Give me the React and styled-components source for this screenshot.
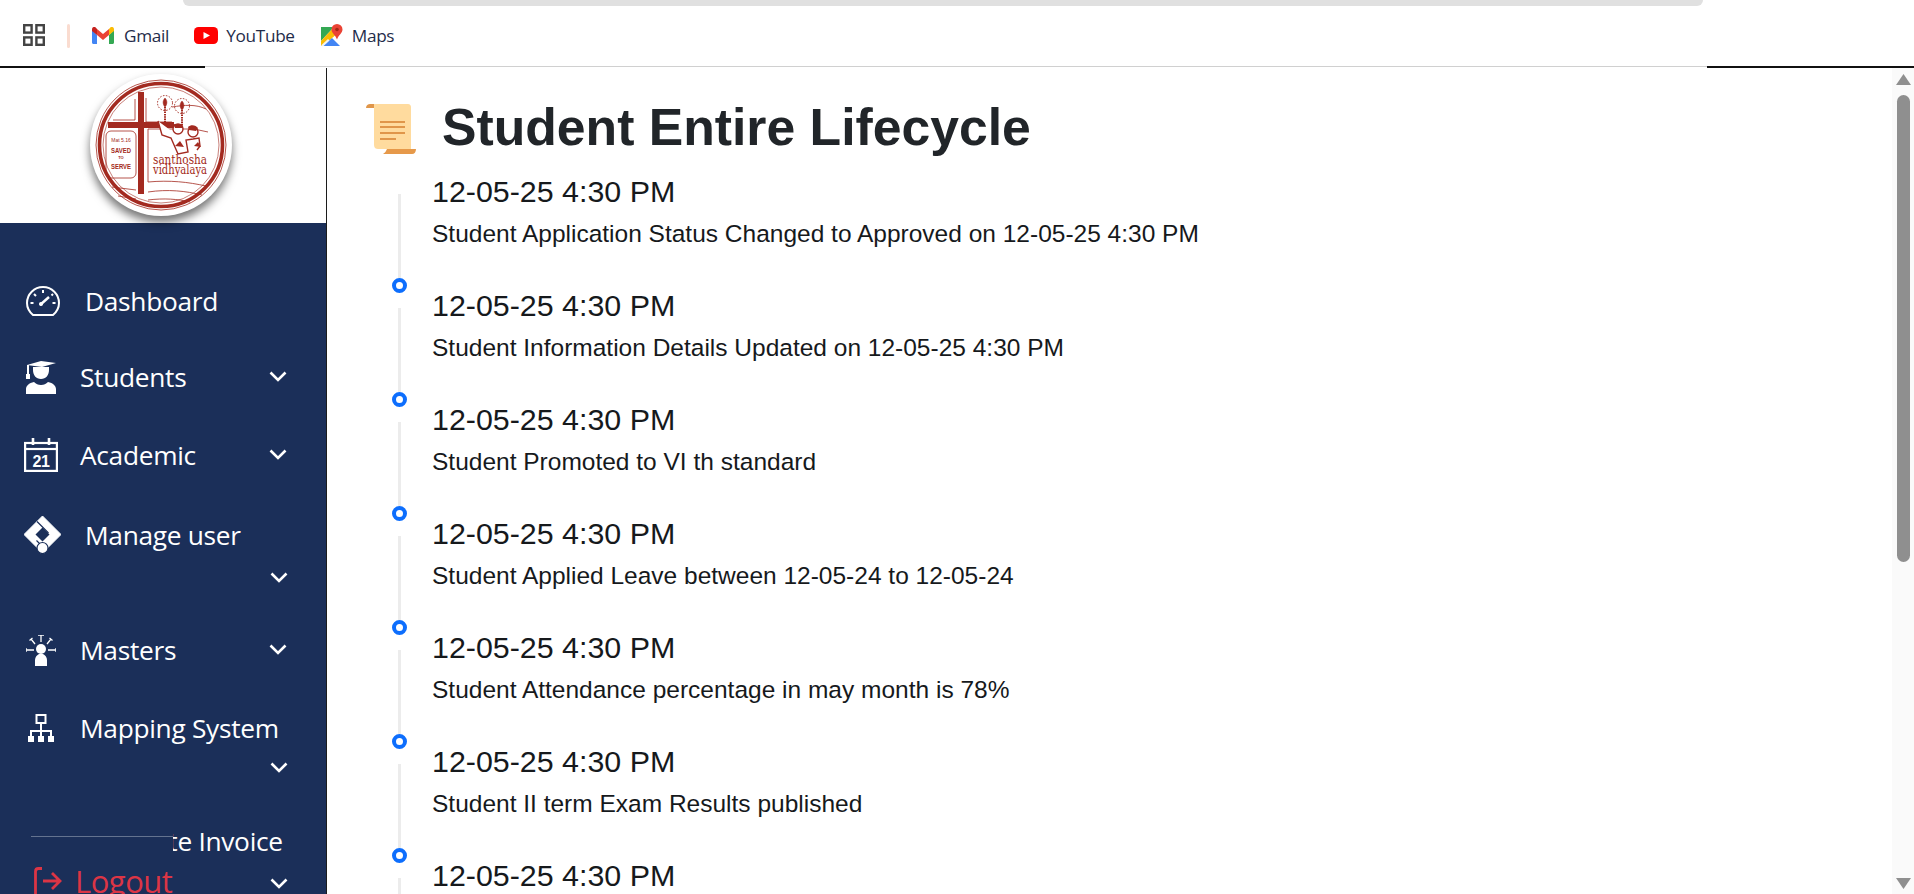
import styled, { createGlobalStyle } from 'styled-components';

const navy = '#1b2f59';
const logoRed = '#a32a20';

const events = [
    'Student Application Status Changed to Approved on 12-05-25 4:30 PM',
    'Student Information Details Updated on 12-05-25 4:30 PM',
    'Student Promoted to VI th standard',
    'Student Applied Leave between 12-05-24 to 12-05-24',
    'Student Attendance percentage in may month is 78%',
    'Student II term Exam Results published',
    'Student Fee Paid for II term',
];

const GlobalStyle = createGlobalStyle`
    html, body {
        margin: 0;
        height: 100%;
        overflow: hidden;
        background: white;
    }
    #root {
        height: 100%;
    }
`;

const Page = styled.div`
    height: 100%;
    display: flex;
    flex-direction: column;
`;

const BrowserBar = styled.header`
    flex: none;
    background: white;
`;

const Omnibox = styled.div`
    height: 6px;
    margin: 0 211px 0 183px;
    background: #e0e0e0;
    border-radius: 0 0 24px 24px;
`;

const Bookmarks = styled.div`
    height: 60px;
    box-sizing: border-box;
    padding: 0 0 2px 23px;
    display: flex;
    align-items: center;
`;

const Divider = styled.span`
    width: 3px;
    height: 24px;
    margin: 2px 22px 0 22px;
    background: #fadcd0;
    border-radius: 2px;
`;

const Bookmark = styled.span`
    display: flex;
    align-items: center;
    gap: ${props => props.$gap || 9}px;
    margin-right: ${props => props.$after || 26}px;
    font: 400 17.2px "Open Sans", sans-serif;
    letter-spacing: -0.3px;
    color: #1f2c4a;
`;

const Edge = styled.div`
    height: 2px;
    display: flex;
`;

const EdgePart = styled.span`
    flex: ${props => (props.$width ? `0 0 ${props.$width}px` : 1)};
    background: ${props => (props.$width ? '#111' : '#d0d0d0')};
    height: ${props => (props.$width ? 2 : 1)}px;
`;

const Body = styled.div`
    flex: 1;
    min-height: 0;
    display: flex;
`;

const Sidebar = styled.aside`
    flex: 0 0 327px;
    position: relative;
    display: flex;
    flex-direction: column;
    box-sizing: border-box;
    border-right: 1px solid #1c1c1c;
    overflow: hidden;
    background: ${navy};
`;

const LogoArea = styled.div`
    flex: 0 0 155px;
    display: flex;
    justify-content: center;
    padding: 6px 5px 0 0;
    box-sizing: border-box;
    background: white;
`;

const LogoDisc = styled.div`
    width: 142px;
    height: 142px;
    border-radius: 50%;
    background: white;
    box-shadow: 0 6px 10px rgba(0, 0, 0, 0.55);
`;

const Nav = styled.nav`
    padding: 59px 0 0 24px;
    display: flex;
    flex-direction: column;
`;

const NavItem = styled.div`
    display: flex;
    flex-wrap: wrap;
    align-items: center;
    margin-bottom: ${props => props.$after || 38}px;
    color: white;
    font: 400 26.3px/38px "Open Sans", sans-serif;
    letter-spacing: -0.3px;
`;

const IconBox = styled.span`
    flex: 0 0 ${props => (props.$wide ? 61 : 56)}px;
    height: 38px;
    display: flex;
    align-items: center;
    padding-left: ${props => props.$pad || 0}px;
    box-sizing: border-box;
`;

const Label = styled.span`
    flex: ${props => (props.$long ? '0 0 222px' : '0 0 189px')};
    white-space: nowrap;
`;

const Chevron = styled.svg`
    width: 18px;
    height: 11px;
    margin: ${props => (props.$below ? `${props.$below}px 0 0 246px` : '-2px 0 0 0')};
`;

const LogoutBlock = styled.div`
    position: absolute;
    left: 31px;
    top: 768px;
    width: 142px;
    height: 60px;
    box-sizing: border-box;
    border-top: 1px solid #64738f;
    background: ${navy};
    box-shadow: 0 -14px 0 ${navy};
    display: flex;
    align-items: center;
    gap: 13px;
    padding: 28px 0 0 3px;
    color: #dc3545;
    font: 400 31px "Open Sans", sans-serif;
    letter-spacing: -0.5px;
`;

const Main = styled.main`
    flex: 1;
    min-width: 0;
    overflow: hidden;
    padding: 29px 0 0 39px;
    color: #212529;
    font-family: "Liberation Sans", Arial, sans-serif;
`;

const TitleRow = styled.div`
    display: flex;
    align-items: center;
    gap: 26px;
    height: 64px;
`;

const Title = styled.h1`
    margin: 0;
    padding-bottom: 4px;
    font-size: 51.7px;
    font-weight: 700;
    line-height: 1.2;
`;

const Timeline = styled.ol`
    list-style: none;
    margin: 9px 0 0 26px;
    padding: 0;
`;

const TimelineItem = styled.li`
    height: 114px;
    display: flex;
    gap: 25px;
`;

const Rail = styled.div`
    flex: 0 0 15px;
    height: 108px;
    padding-top: 24px;
    box-sizing: border-box;
    display: flex;
    flex-direction: column;
    align-items: center;
`;

const RailLine = styled.span`
    flex: 0 0 84px;
    width: 3px;
    background: #ececec;
`;

const RailDot = styled.span`
    flex: none;
    width: 15px;
    height: 15px;
    box-sizing: border-box;
    border: 4px solid #0d6efd;
    border-radius: 50%;
    background: white;
`;

const EventBody = styled.div`
    padding-top: 3px;
    color: #16191c;
`;

const EventDate = styled.div`
    font-size: 30.4px;
    line-height: 36px;
    margin-bottom: 9px;
`;

const EventText = styled.div`
    font-size: 24.5px;
    line-height: 32px;
`;

const ScrollTrack = styled.div`
    flex: 0 0 22px;
    background: #fafafa;
    display: flex;
    flex-direction: column;
    align-items: center;
    padding-top: 6px;
    box-sizing: border-box;
`;

const ScrollArrow = styled.svg`
    width: 15px;
    height: 11px;
    flex: none;
    margin-left: 1px;
    margin-top: ${props => (props.$down ? 'auto' : 0)};
    margin-bottom: ${props => (props.$down ? 5 : 0)}px;
`;

const ScrollThumb = styled.div`
    width: 13px;
    height: 467px;
    margin: 10px 0 0 1px;
    border-radius: 7px;
    background: #8f8f8f;
`;

const AppsIcon = () => (
    <svg width="22" height="22" viewBox="0 0 22 22" fill="none" stroke="#444" strokeWidth="2.4">
        <rect x="1.2" y="1.2" width="7.4" height="7.4" />
        <rect x="13.4" y="1.2" width="7.4" height="7.4" />
        <rect x="1.2" y="13.4" width="7.4" height="7.4" />
        <rect x="13.4" y="13.4" width="7.4" height="7.4" />
    </svg>
);

const GmailIcon = () => (
    <svg width="22" height="17" viewBox="0 0 22 17">
        <path d="M0 3v12.5c0 .8.6 1.5 1.5 1.5H5V8z" fill="#4285f4" />
        <path d="M17 17h3.5c.9 0 1.5-.7 1.5-1.5V3l-5 5z" fill="#34a853" />
        <path d="M17 2v6l5-4V2.200c0-1.900-2.200-3-3.700-1.800z" fill="#fbbc04" />
        <path d="M5 8V2l6 5 6-5v6l-6 5z" fill="#ea4335" />
        <path d="M0 2.200V4l5 4V2L3.700.4C2.200-.8 0 .3 0 2.200z" fill="#c5221f" />
    </svg>
);

const YoutubeIcon = () => (
    <svg width="24" height="17" viewBox="0 0 24 17">
        <rect width="24" height="17" rx="4.500" fill="#f00" />
        <path d="M9.500 5l6.500 3.500-6.500 3.500z" fill="white" />
    </svg>
);

const MapsIcon = () => (
    <svg width="23" height="23" viewBox="0 0 23 23">
        <path d="M1 3h13l-13 14z" fill="#34a853" />
        <path d="M1 17L14 3l5 5L3 22H1z" fill="#fbbc04" />
        <path d="M3 22l9-8 8 8z" fill="#4285f4" />
        <path d="M1 21.500L8 15l1.500 1.500L3 22.500z" fill="#f1f3f4" />
        <path d="M17 0a5.500 5.500 0 0 1 5.500 5.500c0 3.500-4 5.500-5.500 10-1.500-4.500-5.500-6.500-5.500-10A5.500 5.500 0 0 1 17 0z" fill="#ea4335" />
        <circle cx="17" cy="5.500" r="1.800" fill="#a52714" />
    </svg>
);

const Torch = ({ x, y }) => (
    <g stroke={logoRed} fill="none">
        <circle cx={x} cy={y} r="7.500" strokeWidth="1" strokeDasharray="1.500 1.500" />
        <path d={`M${x} ${y - 5}c3 3 2 7 0 9c-2-2-3-6 0-9z`} fill={logoRed} strokeWidth="0.500" />
        <path d={`M${x} ${y + 4}v18`} strokeWidth="2" strokeDasharray="1.500 0.800" />
    </g>
);

const SchoolLogo = () => (
    <svg width="142" height="142" viewBox="0 0 142 142">
        <g fill="none" stroke={logoRed}>
            <circle cx="71" cy="71" r="65" strokeWidth="0.800" />
            <circle cx="71" cy="71" r="61.500" strokeWidth="3.600" />
            <circle cx="71" cy="71" r="58" strokeWidth="0.600" />
            <path d="M23 46h22V25M56 24v24h26" strokeWidth="0.800" />
            <rect x="16" y="57" width="30" height="47" rx="5" strokeWidth="0.800" />
            <path d="M58 55h24l22 0 14 3M58 55v53M22 113c8 1 16 2 24 3M58 108c22-2 40 0 58 4M58 118c20-3 38-1 54 3M58 126c16-2 30-1 42 2M28 122l18 3" strokeWidth="0.800" />
            <path d="M82 33c12-2 24-3 34 2" strokeWidth="0.800" />
        </g>
        <path d="M48 18h6v30h30v6h-30v66h-6V54H18v-6h30z" fill={logoRed} />
        <Torch x={75} y={29} />
        <Torch x={92} y={32} />
        <g fill="white" stroke={logoRed} strokeWidth="1.400">
            <path d="M68 47l4 14 9 3 7 16 10-2-2-12 7-1 6-1 1 8-3 4" />
            <circle cx="88" cy="55" r="5" />
            <circle cx="103" cy="58" r="5" />
        </g>
        <path d="M84 50h9l-1 4h-7zM98 53c3-3 8-2 10 1l-2 3-7-1z" fill={logoRed} />
        <path d="M85 72l5-5 4 6zM104 72l4-4 3 5z" fill={logoRed} />
        <g fill={logoRed} textAnchor="middle" fontFamily='"Liberation Sans", sans-serif'>
            <text x="31" y="68" fontSize="5">Mat 5.16</text>
            <text x="31" y="79" fontSize="8" fontWeight="700" textLength="20" lengthAdjust="spacingAndGlyphs">SAVED</text>
            <text x="31" y="85" fontSize="4" fontWeight="700">TO</text>
            <text x="31" y="95" fontSize="8" fontWeight="700" textLength="20" lengthAdjust="spacingAndGlyphs">SERVE</text>
            <text x="90" y="90" fontSize="13" fontFamily='"DejaVu Serif", serif' textLength="54" lengthAdjust="spacingAndGlyphs">santhosha</text>
            <text x="90" y="100" fontSize="12" fontFamily='"DejaVu Serif", serif' textLength="54" lengthAdjust="spacingAndGlyphs">vidhyalaya</text>
        </g>
    </svg>
);

const GaugeIcon = () => (
    <svg width="34" height="30" viewBox="0 0 34 30" fill="none" stroke="white" strokeWidth="2">
        <path d="M7 29h20c3.500-3 6-7 6-12a16 16 0 0 0-32 0c0 5 2.500 9 6 12z" />
        <path d="M14 19l9-8" strokeWidth="2.400" />
        <circle cx="15" cy="18" r="2" fill="white" stroke="none" />
        <path d="M17 4v3M8 8l2 2M27 8l-1.500 1.500M4.500 17h3M26.500 17h3" />
    </svg>
);

const StudentIcon = () => (
    <svg width="30" height="33" viewBox="0 0 30 33" fill="white">
        <path d="M1 4l14-4 15 2-14 4z" />
        <path d="M1 4h2v9h1v5H0v-5h1zM7 6h16v3c0 5-3 9-8 9s-8-4-8-9z" />
        <path d="M0 33v-5c0-3 3-6 8-7 2 2 4 3 7 3s5-1 7-3c5 1 8 4 8 7v5z" />
    </svg>
);

const CalendarIcon = () => (
    <svg width="34" height="34" viewBox="0 0 34 34" fill="none" stroke="white" strokeWidth="2.200">
        <rect x="1.100" y="5" width="31.800" height="27.900" />
        <path d="M1 11h32" />
        <path d="M9 0v7M25 0v7" strokeWidth="2.600" />
        <text x="17" y="29" textAnchor="middle" fontSize="16" fontWeight="700" fill="white" stroke="none" fontFamily='"Liberation Sans", sans-serif'>21</text>
    </svg>
);

const TagIcon = () => (
    <svg width="37" height="38" viewBox="0 0 37 38">
        <path d="M18.500 0L37 18.500 18.500 37 0 18.500z" fill="white" strokeLinejoin="round" stroke="white" strokeWidth="1" />
        <path d="M18.500 11.500l7 7-7 7-7-7z" fill={navy} />
        <path d="M13 5.500L24.500 17M12.500 24.500L17 29" stroke={navy} strokeWidth="1.200" fill="none" />
        <circle cx="18.500" cy="32" r="5.500" fill="white" stroke={navy} strokeWidth="1.200" />
    </svg>
);

const MastersIcon = () => (
    <svg width="30" height="31" viewBox="0 0 30 31" fill="white">
        <path d="M0 15h8M22 15h8M0 13v4M30 13v4M15 0v7M12 0h6M5 4l4 5M3.500 5.500l3-2.500M25 4l-4 5M23.500 3l3 2.500" stroke="white" strokeWidth="1.300" fill="none" />
        <circle cx="15" cy="14" r="5" />
        <path d="M9 31v-6c0-3 2-5 4-6h4c2 1 4 3 4 6v6z" />
    </svg>
);

const SitemapIcon = () => (
    <svg width="26" height="28" viewBox="0 0 26 28" fill="none" stroke="white" strokeWidth="2">
        <rect x="8.500" y="1" width="9" height="8" />
        <path d="M13 9v13M3 22v-5h20v5" />
        <rect x="0" y="22" width="6" height="6" fill="white" stroke="none" />
        <rect x="10" y="22" width="6" height="6" fill="white" stroke="none" />
        <rect x="20" y="22" width="6" height="6" fill="white" stroke="none" />
    </svg>
);

const LogoutIcon = () => (
    <svg width="28" height="28" viewBox="0 0 28 28" fill="none" stroke="#dc3545" strokeWidth="2.800" style={{ flex: 'none' }}>
        <path d="M8 1.500H4.500C2.800 1.500 1.500 2.800 1.500 4.500V28" />
        <path d="M9 14h17M18 6l8 8-8 8" />
    </svg>
);

const ScrollIcon = () => (
    <svg width="50" height="50" viewBox="0 0 50 50">
        <path d="M8 0h34c2 0 3 1.500 3 3v42H12c-2 0-4-1-4-4z" fill="#ffdb9e" />
        <path d="M0 4c0-2.500 2-4 4-4h4v4z" fill="#e0964a" />
        <path d="M17 50c2-1 3-3 4-5h29c0 3-1.500 5-4 5z" fill="#e6994a" />
        <path d="M14 18h25M14 23h25M14 29h25M14 35h16" stroke="#e0964a" strokeWidth="1.800" />
    </svg>
);

const ChevronDown = ({ below }) => (
    <Chevron $below={below} viewBox="0 0 18 11" fill="none" stroke="white" strokeWidth="2.600">
        <path d="M1.500 1.500L9 9l7.500-7.500" />
    </Chevron>
);

const menu = [
    { label: 'Dashboard', icon: <GaugeIcon />, wide: true, pad: 2, noChevron: true, after: 38 },
    { label: 'Students', icon: <StudentIcon />, pad: 2, after: 40 },
    { label: 'Academic', icon: <CalendarIcon />, after: 42 },
    { label: 'Manage user', icon: <TagIcon />, wide: true, below: 18, after: 48 },
    { label: 'Masters', icon: <MastersIcon />, pad: 2, after: 40 },
    { label: 'Mapping System', icon: <SitemapIcon />, pad: 4, below: 15, long: true, after: 49 },
    { label: 'Generate Invoice', icon: <span />, below: 18, long: true, after: 0 },
];

const App = () => {
    return (
        <Page>
            <GlobalStyle />
            <BrowserBar>
                <Omnibox />
                <Bookmarks>
                    <AppsIcon />
                    <Divider />
                    <Bookmark $gap={10} $after={25}><GmailIcon />Gmail</Bookmark>
                    <Bookmark $gap={8} $after={25}><YoutubeIcon />YouTube</Bookmark>
                    <Bookmark $gap={9}><MapsIcon />Maps</Bookmark>
                </Bookmarks>
                <Edge>
                    <EdgePart $width={205} />
                    <EdgePart />
                    <EdgePart $width={207} />
                </Edge>
            </BrowserBar>
            <Body>
                <Sidebar>
                    <LogoArea>
                        <LogoDisc><SchoolLogo /></LogoDisc>
                    </LogoArea>
                    <Nav>
                        {menu.map(item => (
                            <NavItem key={item.label} $after={item.after}>
                                <IconBox $wide={item.wide} $pad={item.pad}>{item.icon}</IconBox>
                                <Label $long={item.long}>{item.label}</Label>
                                {!item.noChevron && <ChevronDown below={item.below} />}
                            </NavItem>
                        ))}
                    </Nav>
                    <LogoutBlock>
                        <LogoutIcon />
                        Logout
                    </LogoutBlock>
                </Sidebar>
                <Main>
                    <TitleRow>
                        <ScrollIcon />
                        <Title>Student Entire Lifecycle</Title>
                    </TitleRow>
                    <Timeline>
                        {events.map(text => (
                            <TimelineItem key={text}>
                                <Rail>
                                    <RailLine />
                                    <RailDot />
                                </Rail>
                                <EventBody>
                                    <EventDate>12-05-25 4:30 PM</EventDate>
                                    <EventText>{text}</EventText>
                                </EventBody>
                            </TimelineItem>
                        ))}
                    </Timeline>
                </Main>
                <ScrollTrack>
                    <ScrollArrow viewBox="0 0 15 11" fill="#8f8f8f"><path d="M7.500 0L15 11H0z" /></ScrollArrow>
                    <ScrollThumb />
                    <ScrollArrow $down viewBox="0 0 15 11" fill="#8f8f8f"><path d="M0 0h15L7.500 11z" /></ScrollArrow>
                </ScrollTrack>
            </Body>
        </Page>
    );
};

export default App;
